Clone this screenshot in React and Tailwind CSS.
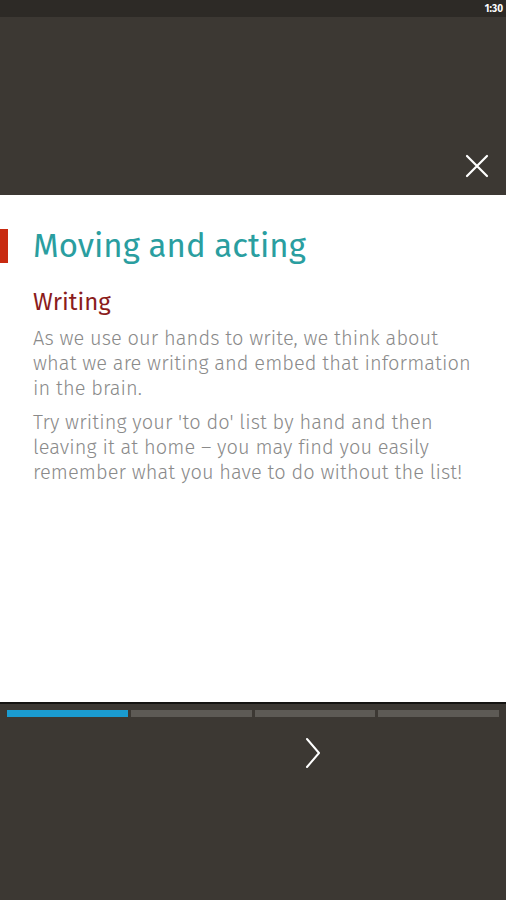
export default function App() {
  const font = { fontFamily: '"Fira Sans", "Open Sans", "Noto Sans", sans-serif' };
  return (
    <div className="w-[506px] h-[900px] flex flex-col bg-[#3c3833] overflow-hidden" style={font}>
      <div className="h-[17px] bg-[#2d2a26] flex items-center justify-end pr-[3px]">
        <span className="text-[10px] leading-none text-white font-bold">1:30</span>
      </div>
      <div className="h-[178px] flex items-end justify-end pr-[17px] pb-[17px]">
        <svg width="24" height="24" viewBox="0 0 24 24" fill="none" stroke="white" strokeWidth="2.2" strokeLinecap="round">
          <path d="M2 2 L22 22 M22 2 L2 22" />
        </svg>
      </div>
      <div className="h-[507px] bg-white flex flex-col pt-[34px]">
        <div className="flex items-center">
          <div className="w-[8px] h-[34px] bg-[#c82a10]" />
          <h1 className="ml-[25px] text-[33px] leading-[34px] text-[#2a9ea0]">Moving and acting</h1>
        </div>
        <div className="pl-[33px] pr-[20px]">
          <h2 className="mt-[25px] text-[24px] leading-[28px] text-[#8b1c1c]">Writing</h2>
          <p className="mt-[10px] text-[20px] leading-[25px] font-light tracking-[0.1px] text-[#8a8a8a]">
            As we use our hands to write, we think about what we are writing and embed that information in the brain.
          </p>
          <p className="mt-[9px] text-[20px] leading-[25px] font-light tracking-[0.1px] text-[#8a8a8a]">
            Try writing your 'to do' list by hand and then leaving it at home – you may find you easily remember what you have to do without the list!
          </p>
        </div>
      </div>
      <div className="h-[2px] bg-[#151412]" />
      <div className="flex gap-[3px] px-[7px] pt-[6px]">
        <div className="flex-1 h-[7px] bg-[#1a9bd0]" />
        <div className="flex-1 h-[7px] bg-[#5d5a55]" />
        <div className="flex-1 h-[7px] bg-[#5d5a55]" />
        <div className="flex-1 h-[7px] bg-[#5d5a55]" />
      </div>
      <div className="flex justify-center pt-[20px] pl-[120px]">
        <svg width="16" height="32" viewBox="0 0 16 32" fill="none" stroke="white" strokeWidth="2" strokeLinecap="round" strokeLinejoin="round">
          <path d="M2 2 L14 16 L2 30" />
        </svg>
      </div>
    </div>
  );
}
